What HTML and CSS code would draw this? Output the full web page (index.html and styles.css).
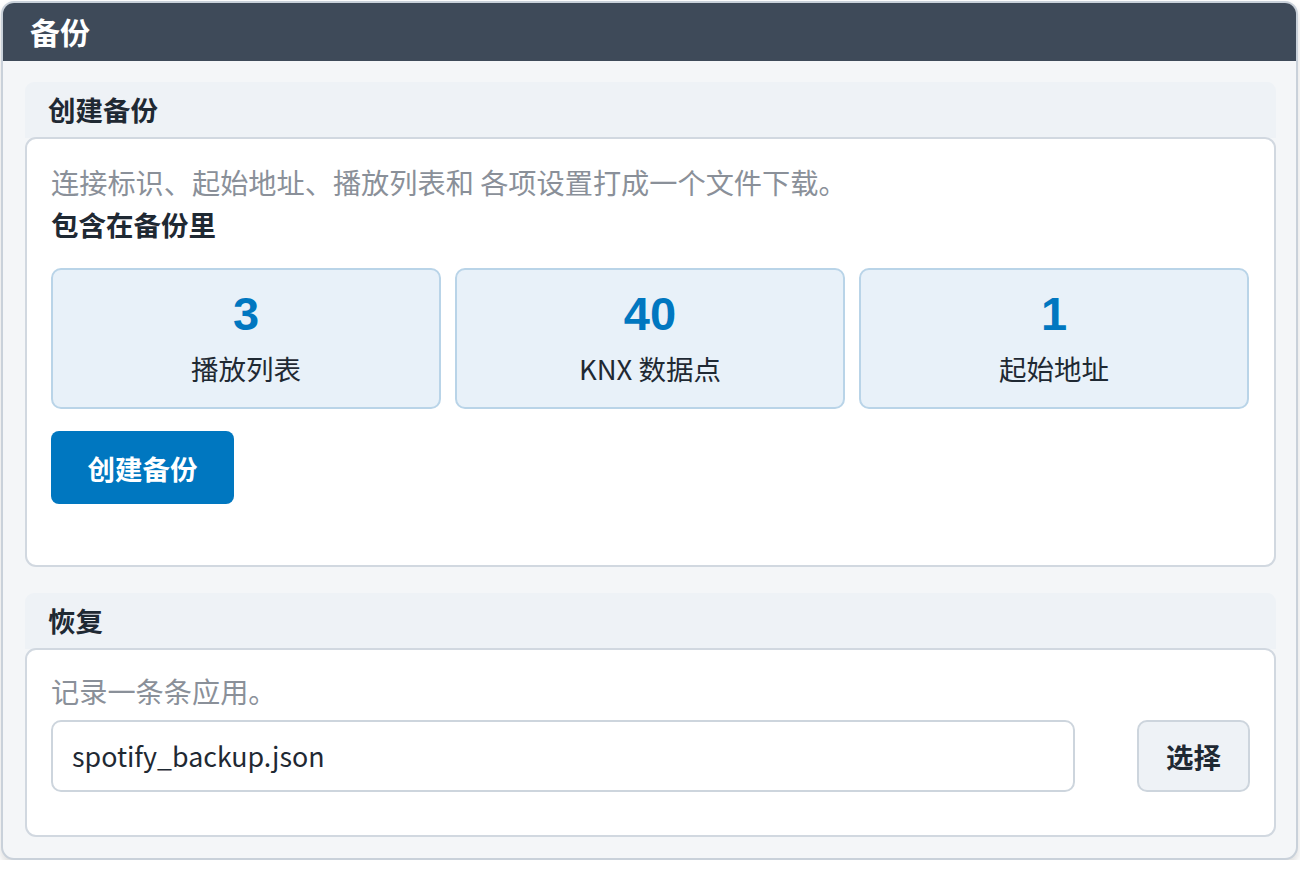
FILE: index.html
```html
<!DOCTYPE html>
<html lang="zh">
<head>
<meta charset="utf-8">
<title>备份</title>
<link rel="stylesheet" href="styles.css">
</head>
<body>
<div class="card">
  <div class="card-head">备份</div>
  <div class="card-body">
    <section class="section">
      <div class="section-head">创建备份</div>
      <div class="section-box box-create">
        <p class="desc">连接标识、起始地址、播放列表和 各项设置打成一个文件下载。</p>
        <div class="subhead">包含在备份里</div>
        <div class="stats">
          <div class="stat"><div class="stat-num">3</div><div class="stat-label">播放列表</div></div>
          <div class="stat"><div class="stat-num">40</div><div class="stat-label">KNX 数据点</div></div>
          <div class="stat"><div class="stat-num">1</div><div class="stat-label">起始地址</div></div>
        </div>
        <button class="btn-primary">创建备份</button>
      </div>
    </section>
    <section class="section">
      <div class="section-head">恢复</div>
      <div class="section-box box-restore">
        <p class="desc">记录一条条应用。</p>
        <div class="file-row">
          <div class="file-input">spotify_backup.json</div>
          <button class="btn-secondary">选择</button>
        </div>
      </div>
    </section>
  </div>
</div>
</body>
</html>
```

FILE: styles.css
```css
* { box-sizing: border-box; }
html, body { margin: 0; padding: 0; background: #ffffff; }
body {
  font-family: "Noto Sans CJK SC", "Noto Sans", sans-serif;
  color: #1f2933;
  padding: 1px 2px 0 1px;
}
.card {
  border: 2px solid #c9d1da;
  border-radius: 13px;
  overflow: hidden;
  background: #f4f6f8;
  box-shadow: 0 5px 9px rgba(0,0,0,0.14);
  height: 859px;
}
.card-head {
  background: #3e4a59;
  color: #ffffff;
  font-size: 30px;
  font-weight: 700;
  height: 58px;
  line-height: 56px;
  padding-left: 27px;
}
.card-body {
  padding: 21px 20px 22px 22px;
  display: flex;
  flex-direction: column;
  gap: 26px;
}
.section-head {
  background: #eef2f6;
  border-radius: 9px 9px 0 0;
  height: 56px;
  line-height: 54px;
  padding-left: 23px;
  font-size: 27.5px;
  font-weight: 700;
  color: #1f2933;
  margin-bottom: -1px;
}
.section-box {
  background: #ffffff;
  border: 2px solid #d1d8e0;
  border-radius: 11px;
  padding: 24px 24px;
}
.box-create { height: 430px; padding-top: 24px; }
.box-restore { height: 189px; padding-top: 22px; }
.desc {
  margin: 0;
  font-size: 28.2px;
  line-height: 38px;
  color: #8a9099;
}
.subhead {
  font-size: 27.5px;
  font-weight: 700;
  line-height: 40px;
  margin-top: 3px;
  color: #1f2933;
}
.stats {
  display: grid;
  grid-template-columns: repeat(3, 390px);
  gap: 14px;
  margin-top: 24px;
}
.stat {
  height: 141px;
  background: #e8f1f9;
  border: 2px solid #b9d4e8;
  border-radius: 10px;
  text-align: center;
  padding-top: 18px;
}
.stat-num {
  font-family: "Liberation Sans", Arial, sans-serif;
  font-weight: 700;
  font-size: 47px;
  line-height: 52px;
  color: #0077c0;
}
.stat-label {
  font-size: 27.5px;
  line-height: 40px;
  margin-top: 8px;
  color: #1f2933;
}
.btn-primary {
  margin-top: 22px;
  width: 183px;
  height: 73px;
  border: none;
  border-radius: 8px;
  background: #0077c0;
  color: #ffffff;
  font-family: inherit;
  font-size: 27.5px;
  font-weight: 700;
  padding: 0;
}
.file-row {
  display: flex;
  align-items: center;
  gap: 62px;
  margin-top: 10px;
}
.file-input {
  width: 1026px;
  height: 72px;
  border: 2px solid #cdd5dd;
  border-radius: 10px;
  padding-left: 19px;
  line-height: 68px;
  font-size: 26.8px;
  color: #1f2933;
}
.btn-secondary {
  width: 113px;
  height: 72px;
  border: 2px solid #cdd5dd;
  border-radius: 10px;
  background: #eef2f6;
  color: #1f2933;
  font-family: inherit;
  font-size: 27.5px;
  font-weight: 700;
  padding: 0;
}
```
